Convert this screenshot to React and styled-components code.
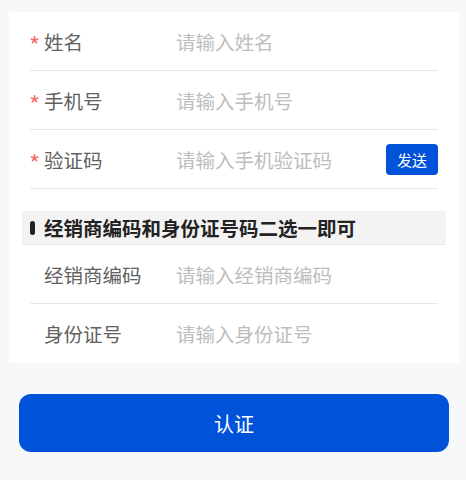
import React from "react";
import styled, { createGlobalStyle } from "styled-components";

const GlobalStyle = createGlobalStyle`
  body {
    margin: 0;
    background: #f7f8fa;
    font-family: "Noto Sans CJK SC", "Noto Sans", sans-serif;
  }
`;

const Page = styled.div`
  width: 466px;
  height: 480px;
  padding: 12px 0 0 9px;
  box-sizing: border-box;
  overflow: hidden;
`;

const Card = styled.div`
  width: 450px;
  background: #fff;
  padding: 0 13px;
  box-sizing: border-box;
`;

const Row = styled.div`
  display: flex;
  align-items: center;
  height: 59px;
  margin: 0 8px;
  border-bottom: ${(p) => (p.last ? "none" : "1px solid #e4e6f0")};
  box-sizing: border-box;
`;

const Label = styled.div`
  width: 146px;
  display: flex;
  align-items: center;
  font-size: 19.5px;
  color: #616161;
  flex-shrink: 0;
`;

const Star = styled.span`
  color: #f76e6e;
  width: 15px;
  font-size: 24px;
  line-height: 1;
  padding-top: 8px;
  margin-left: -1px;
`;

const Input = styled.input`
  flex: 1;
  min-width: 0;
  border: none;
  outline: none;
  padding: 0;
  font-family: inherit;
  font-size: 19.5px;
  color: #333;
  background: transparent;
  &::placeholder {
    color: #bdbdbd;
  }
`;

const SendButton = styled.button`
  width: 52px;
  height: 31px;
  border: none;
  border-radius: 4px;
  background: #0052d9;
  color: #fff;
  font-family: inherit;
  font-size: 15px;
  padding: 0;
  flex-shrink: 0;
`;

const SectionHeader = styled.div`
  display: flex;
  align-items: center;
  gap: 9px;
  height: 34px;
  margin-top: 22px;
  padding-left: 8px;
  background: #f3f3f3;
  border-bottom: 1px solid #e4e6f0;
  box-sizing: border-box;
  font-size: 19.5px;
  font-weight: 700;
  color: #222;
`;

const Bar = styled.span`
  width: 5px;
  height: 14px;
  border-radius: 3px;
  background: #222;
`;

const SubmitButton = styled.button`
  display: block;
  width: 430px;
  height: 58px;
  margin: 31px 0 0 10px;
  border: none;
  border-radius: 12px;
  background: #0052d9;
  color: #fff;
  font-family: inherit;
  font-size: 20px;
  font-weight: 400;
`;

const required = [
  { label: "姓名", placeholder: "请输入姓名" },
  { label: "手机号", placeholder: "请输入手机号" },
  { label: "验证码", placeholder: "请输入手机验证码", send: true },
];

const optional = [
  { label: "经销商编码", placeholder: "请输入经销商编码" },
  { label: "身份证号", placeholder: "请输入身份证号" },
];

export default function App() {
  return (
    <Page>
      <GlobalStyle />
      <Card>
        {required.map((f) => (
          <Row key={f.label}>
            <Label>
              <Star>*</Star>
              {f.label}
            </Label>
            <Input placeholder={f.placeholder} />
            {f.send && <SendButton>发送</SendButton>}
          </Row>
        ))}
        <SectionHeader>
          <Bar />
          经销商编码和身份证号码二选一即可
        </SectionHeader>
        {optional.map((f, i) => (
          <Row key={f.label} last={i === optional.length - 1}>
            <Label>
              <Star />
              {f.label}
            </Label>
            <Input placeholder={f.placeholder} />
          </Row>
        ))}
      </Card>
      <SubmitButton>认证</SubmitButton>
    </Page>
  );
}
